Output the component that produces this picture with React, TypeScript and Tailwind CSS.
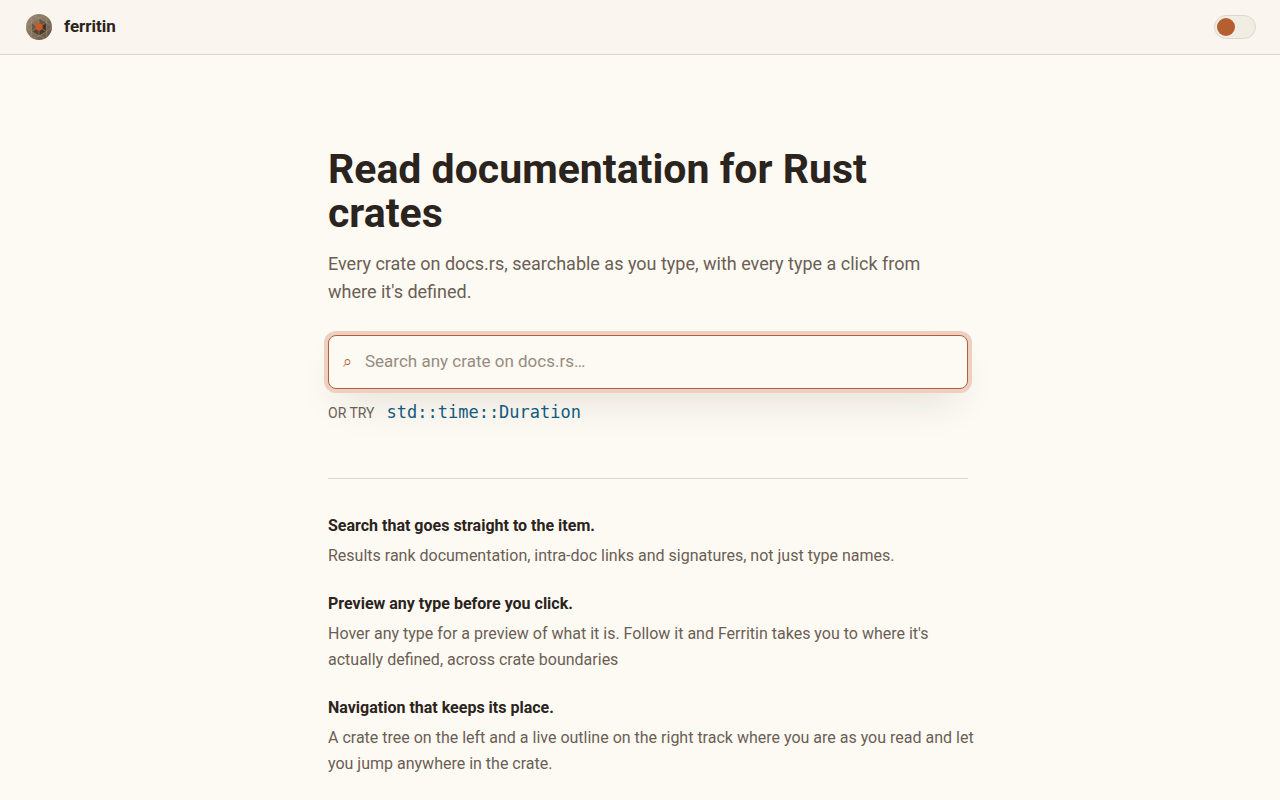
import React from 'react';

interface Feature {
  title: string;
  text: string;
}

const features: Feature[] = [
  {
    title: 'Search that goes straight to the item.',
    text: 'Results rank documentation, intra-doc links and signatures, not just type names.',
  },
  {
    title: 'Preview any type before you click.',
    text: "Hover any type for a preview of what it is. Follow it and Ferritin takes you to where it's actually defined, across crate boundaries",
  },
  {
    title: 'Navigation that keeps its place.',
    text: 'A crate tree on the left and a live outline on the right track where you are as you read and let you jump anywhere in the crate.',
  },
];

const Logo: React.FC = () => (
  <svg viewBox="0 0 26 26" className="size-[26px]" aria-hidden="true">
    <defs>
      <clipPath id="shell">
        <circle cx="13" cy="13" r="13" />
      </clipPath>
      <linearGradient id="brown" x1="0" y1="0" x2="1" y2="1">
        <stop offset="0" stopColor="#9c8a70" />
        <stop offset="0.5" stopColor="#857460" />
        <stop offset="1" stopColor="#5c4b3b" />
      </linearGradient>
    </defs>
    <g clipPath="url(#shell)">
      <rect width="26" height="26" fill="url(#brown)" />
      <path d="M13 13 5.500 8.500 13 4z" fill="#85735c" />
      <path d="M13 13V4l7.500 4.500z" fill="#6a5743" />
      <path d="M13 13 20.500 8.500v9z" fill="#43342a" />
      <path d="M13 13l7.500 4.500L13 22z" fill="#4a3a2e" />
      <path d="M13 13v9l-7.500-4.500z" fill="#564534" />
      <path d="M13 13 5.500 17.500v-9z" fill="#6c5a47" />
      <path
        d="M13 4 20.500 8.500V17.500L13 22 5.500 17.500V8.500zM13 4 5 1M13 4l8-3M5.500 8.500 5 1M20.500 8.500 21 1M5.500 8.500 0 13l5.500 4.500M20.500 8.500 26 13l-5.500 4.500M13 22l-8 3 .5-7.500M13 22l8 3-.5-7.500M13 4v5M5.500 8.500l4 2.500M20.500 8.500l-4 2.500M5.500 17.500l4-2.500M20.500 17.500l-4-2.500M13 17v5"
        fill="none"
        stroke="#a89880"
        strokeWidth="0.5"
      />
      <path d="M13 9l3.600 2v4L13 17l-3.600-2v-4z" fill="#cb5a2b" />
    </g>
  </svg>
);

const App: React.FC = () => (
  <div className="min-h-screen bg-[#fdfaf3] font-['Roboto','Liberation_Sans',sans-serif] text-[#2b231d]">
    <header className="flex h-[55px] items-center justify-between border-b border-[#ddd6cf] bg-[#faf5ee] pr-6 pl-[26px]">
      <a href="#" className="flex items-center gap-3 text-[17px] font-bold">
        <Logo />
        ferritin
      </a>
      <label className="flex h-6 w-[42px] cursor-pointer items-center rounded-full border border-[#e0d8cc] bg-[#f2ede2] px-0.5">
        <input type="checkbox" aria-label="Dark mode" className="peer sr-only" />
        <span className="size-[18px] rounded-full bg-[#b55e30] peer-checked:ml-auto" />
      </label>
    </header>

    <main className="pl-4">
      <div className="mx-auto max-w-[640px] pt-[92px] pb-6">
        <h1 className="text-[41px] leading-11 font-bold">Read documentation for Rust crates</h1>
        <p className="mt-[15px] text-lg leading-7 text-[#6b5e55]">
          Every crate on docs.rs, searchable as you type, with every type a click from where it's defined.
        </p>

        <label className="mt-[29px] flex h-[54px] items-center gap-3 rounded-lg border border-[#b0603c] bg-[#fdfaf3] px-3.5 shadow-[0_0_0_4px_#edd0c2,0_20px_40px_-12px_#2b231d26]">
          <span className="w-[10px] text-base text-[#b55e30]" aria-hidden="true">⌕</span>
          <input
            type="text"
            aria-label="Search any crate"
            placeholder="Search any crate on docs.rs…"
            className="min-w-0 flex-1 bg-transparent text-[17px] outline-none placeholder:text-[#978b80]"
          />
        </label>

        <div className="mt-[9px] flex items-baseline gap-3">
          <span className="text-[14px] text-[#6b5e55]">OR TRY</span>
          <a href="#" className="font-['DejaVu_Sans_Mono',monospace] text-[17px] leading-7 text-[#125a80]">
            std::time::Duration
          </a>
        </div>

        <section className="mt-[52px] flex flex-col gap-[22px] border-t border-[#ddd6cf] pt-[34px]">
          {features.map((feature) => (
            <div key={feature.title}>
              <h2 className="text-base leading-[26px] font-bold">{feature.title}</h2>
              <p className="mt-1 -mr-3 text-base leading-[26px] text-[#6b5e55]">{feature.text}</p>
            </div>
          ))}
        </section>
      </div>
    </main>
  </div>
);

export default App;
